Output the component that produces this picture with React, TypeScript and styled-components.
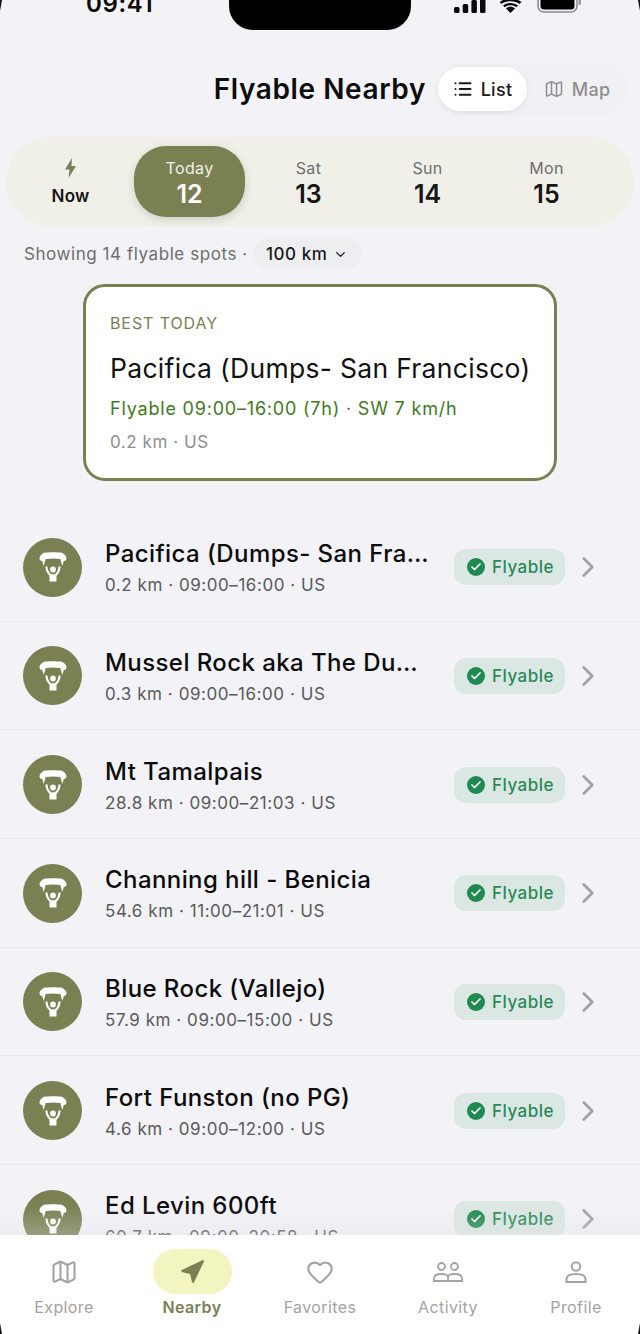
import React from 'react';
import styled, { createGlobalStyle } from 'styled-components';
import { Check, ChevronDown, ChevronRight, Heart, List as ListIcon, Map as MapIcon, Navigation } from 'lucide-react';

const olive = '#7a8052';

const GlobalStyle = createGlobalStyle`
  html, body { margin: 0; padding: 0; background: #f2f2f7; }
  body { font-family: Inter, "Liberation Sans", sans-serif; }
  * { box-sizing: border-box; }
`;

const Screen = styled.div`
  position: relative;
  width: 640px;
  height: 1334px;
  overflow: hidden;
  display: flex;
  flex-direction: column;
  background: #f2f2f7;
`;

// the device's rounded corners just show at the very edges of the capture
const Corner = styled.div<{ $right?: boolean; $bottom?: boolean }>`
  position: absolute;
  ${(p) => (p.$right ? 'right: 0;' : 'left: 0;')}
  ${(p) => (p.$bottom ? 'bottom: 0;' : 'top: 0;')}
  width: 2px;
  height: 11px;
  z-index: 2;
  background: #111;
  clip-path: ${(p) =>
    p.$bottom
      ? `polygon(${p.$right ? '100% 0, 100% 100%, 0 100%' : '0 0, 100% 100%, 0 100%'})`
      : `polygon(${p.$right ? '0 0, 100% 0, 100% 100%' : '0 0, 100% 0, 0 100%'})`};
`;

const StatusBar = styled.div`
  height: 30px;
  flex: none;
  display: flex;
  justify-content: space-between;
  overflow: hidden;
`;

const Time = styled.div`
  width: 229px;
  padding-left: 86px;
  margin-top: -11px;
  font-size: 24px;
  line-height: 29px;
  font-weight: 600;
  letter-spacing: 0.6px;
  color: #0a0a0a;
`;

const Notch = styled.div`
  width: 182px;
  height: 30px;
  flex: none;
  background: #000;
  border-radius: 0 0 24px 24px;
`;

const StatusIcons = styled.div`
  width: 229px;
  height: 30px;
  padding: 0 0 17px 43px;
  display: flex;
  align-items: flex-end;
`;

const Header = styled.header`
  margin-top: 33px;
  height: 52px;
  flex: none;
  padding-right: 12px;
  display: flex;
  justify-content: flex-end;
  align-items: center;
  gap: 12px;
`;

const Title = styled.h1`
  margin: 0;
  font-size: 28px;
  font-weight: 600;
  letter-spacing: 0.6px;
  color: #0d0d0d;
`;

const Toggle = styled.div`
  width: 190px;
  height: 52px;
  padding: 4px 0;
  border-radius: 26px;
  background: #f1f1f5;
  display: flex;
  align-items: stretch;
`;

const ToggleOption = styled.div<{ $active?: boolean }>`
  width: ${(p) => (p.$active ? '89px' : '100px')};
  border-radius: 22px;
  display: flex;
  align-items: center;
  justify-content: center;
  gap: 8px;
  font-size: 18px;
  font-weight: 500;
  letter-spacing: 0.3px;
  color: ${(p) => (p.$active ? '#1a1a1a' : '#8e8e8e')};
  background: ${(p) => (p.$active ? '#fff' : 'transparent')};
  box-shadow: ${(p) => (p.$active ? '0 2px 6px rgba(0,0,0,0.08)' : 'none')};
`;

const DateStrip = styled.div`
  margin: 22px 6px 0;
  height: 89px;
  flex: none;
  padding: 9px 9px;
  border-radius: 44px;
  background: #f0f0e8;
  display: flex;
  gap: 8px;
`;

const DateItem = styled.div<{ $active?: boolean }>`
  width: 111px;
  flex: none;
  padding-top: 2px;
  border-radius: 32px;
  display: flex;
  flex-direction: column;
  align-items: center;
  justify-content: center;
  background: ${(p) => (p.$active ? olive : 'transparent')};
  box-shadow: ${(p) => (p.$active ? '0 3px 10px rgba(0,0,0,0.14)' : 'none')};
`;

const DayName = styled.div<{ $active?: boolean }>`
  font-size: 16px;
  line-height: 22px;
  letter-spacing: 0.35px;
  color: ${(p) => (p.$active ? '#f1f1e6' : '#6e6e6e')};
`;

const DayNumber = styled.div<{ $active?: boolean }>`
  font-size: 25px;
  line-height: 30px;
  font-weight: 600;
  color: ${(p) => (p.$active ? '#fff' : '#161616')};
`;

const NowLabel = styled.div`
  font-size: 17px;
  line-height: 24px;
  font-weight: 600;
  letter-spacing: 0.2px;
  color: #161616;
  margin-top: 6px;
`;

const FilterRow = styled.div`
  margin-top: 13px;
  height: 30px;
  flex: none;
  padding-left: 24px;
  display: flex;
  align-items: center;
  gap: 5px;
  font-size: 17px;
  letter-spacing: 0.56px;
  color: #6d6d6d;
`;

const DistanceChip = styled.div`
  width: 109px;
  height: 30px;
  border-radius: 15px;
  background: #eeeef0;
  display: flex;
  align-items: center;
  justify-content: center;
  gap: 6px;
  font-size: 17px;
  font-weight: 500;
  color: #1a1a1a;
`;

const BestCard = styled.section`
  width: 474px;
  height: 197px;
  flex: none;
  margin: 15px 0 32px 83px;
  padding: 26px 24px 0;
  border: 3px solid ${olive};
  border-radius: 22px;
  background: #fff;
`;

const BestLabel = styled.div`
  font-size: 16px;
  line-height: 20px;
  letter-spacing: 0.9px;
  color: ${olive};
`;

const BestName = styled.div`
  margin-top: 18px;
  font-size: 26.5px;
  line-height: 34px;
  letter-spacing: 0.3px;
  white-space: nowrap;
  color: #121212;
`;

const BestWindow = styled.div`
  margin-top: 12px;
  font-size: 18px;
  line-height: 24px;
  letter-spacing: 0.8px;
  color: #3f7a1e;
`;

const BestMeta = styled.div`
  margin-top: 9px;
  font-size: 17px;
  line-height: 24px;
  letter-spacing: 0.55px;
  color: #8e8e8e;
`;

const SpotList = styled.div`
  flex: 1;
  min-height: 0;
  overflow: hidden;
`;

const SpotRow = styled.div`
  height: 108.67px;
  padding: 1px 35px 0 23px;
  display: flex;
  align-items: center;
  border-bottom: 1px solid #e9e9ed;
`;

const Avatar = styled.div`
  width: 59px;
  height: 59px;
  flex: none;
  border-radius: 50%;
  background: ${olive};
  display: flex;
  align-items: center;
  justify-content: center;
`;

const SpotText = styled.div`
  flex: 1;
  min-width: 0;
  margin-left: 23px;
`;

const SpotName = styled.div`
  width: 326px;
  margin-top: 1px;
  font-size: 24px;
  line-height: 30px;
  font-weight: 500;
  letter-spacing: 0.42px;
  color: #0c0c0c;
  white-space: nowrap;
  overflow: hidden;
  text-overflow: ellipsis;
`;

const SpotMeta = styled.div`
  margin-top: 5px;
  font-size: 17px;
  line-height: 22px;
  letter-spacing: 0.55px;
  color: #5a5a5a;
  white-space: nowrap;
`;

const FlyablePill = styled.div`
  width: 111px;
  height: 36px;
  flex: none;
  padding-left: 13px;
  border-radius: 12px;
  background: #dbe7e3;
  display: flex;
  align-items: center;
  gap: 7px;
  font-size: 17px;
  font-weight: 500;
  letter-spacing: 0.5px;
  color: #2a8a57;
`;

const CheckDot = styled.span`
  width: 18px;
  height: 18px;
  border-radius: 50%;
  background: #1f8a50;
  display: flex;
  align-items: center;
  justify-content: center;
  color: #fff;
`;

const Chevron = styled.span`
  margin-left: 6px;
  color: #a2a2a2;
  display: flex;
`;

const Fade = styled.div`
  position: absolute;
  left: 0;
  right: 0;
  bottom: 99px;
  height: 30px;
  pointer-events: none;
  background: linear-gradient(to bottom, rgba(225, 225, 228, 0), rgba(225, 225, 228, 0.3));
`;

const TabBar = styled.nav`
  height: 99px;
  flex: none;
  position: relative;
  background: #fff;
  display: grid;
  grid-template-columns: repeat(5, 128px);
`;

const Tab = styled.div<{ $active?: boolean }>`
  padding-top: 14px;
  display: flex;
  flex-direction: column;
  align-items: center;
  font-size: 16px;
  line-height: 24px;
  letter-spacing: 0.4px;
  font-weight: ${(p) => (p.$active ? 600 : 400)};
  color: ${(p) => (p.$active ? olive : '#a3a3a3')};
`;

const TabIcon = styled.div<{ $active?: boolean }>`
  width: 79px;
  height: 45px;
  margin-bottom: 1px;
  border-radius: 22px;
  background: ${(p) => (p.$active ? '#f3f5c1' : 'transparent')};
  display: flex;
  align-items: center;
  justify-content: center;
`;

const Glider = () => (
  <svg width="28" height="30" viewBox="0 0 28 30" fill="#fff">
    <path d="M5 .8C9 0 19 0 23 .8C25 1.800 27.500 4 27.500 6.200C27.500 8 26.500 9 24.800 9L23.300 14L21.300 7C17 6.300 11 6.300 6.700 7L4.700 14L3.200 9C1.500 9 .5 8 .5 6.200C.5 4 3 1.800 5 .8Z" />
    <circle cx="14" cy="17.500" r="2.900" />
    <path d="M7.400 14.500C7.800 18.500 9 21.500 11.500 23" fill="none" stroke="#fff" strokeWidth="2.200" />
    <path d="M20.600 14.500C20.200 18.500 19 21.500 16.500 23" fill="none" stroke="#fff" strokeWidth="2.200" />
    <rect x="10.500" y="22.300" width="7" height="7.200" />
  </svg>
);

const Bolt = () => (
  <svg width="11" height="20" viewBox="0 0 11 20" fill={olive}>
    <path d="M7 0L0 11.500H4.500L3.500 20L11 8H6.500Z" />
  </svg>
);

const CommunityIcon = () => (
  <svg width="30" height="20" viewBox="0 0 30 20" fill="none" stroke="currentColor" strokeWidth="1.800">
    <circle cx="8.500" cy="4.500" r="3.500" />
    <circle cx="21.500" cy="4.500" r="3.500" />
    <path d="M1 19v-2.500C1 13.500 4 12 8.500 12c3 0 5.500.7 6.500 2.300 1-1.600 3.500-2.300 6.500-2.300 4.500 0 7.500 1.500 7.500 4.500V19Z" />
    <path d="M15 14.300V19" />
  </svg>
);

const ProfileIcon = () => (
  <svg width="22" height="22" viewBox="0 0 22 22" fill="none" stroke="currentColor" strokeWidth="2">
    <circle cx="11" cy="5.500" r="4.200" />
    <path d="M1.500 21v-3C1.500 14.500 5.500 13 11 13s9.500 1.500 9.500 5v3Z" />
  </svg>
);

const spots = [
  ['Pacifica (Dumps- San Francisco)', '0.2 km · 09:00–16:00 · US'],
  ['Mussel Rock aka The Dumps', '0.3 km · 09:00–16:00 · US'],
  ['Mt Tamalpais', '28.8 km · 09:00–21:03 · US'],
  ['Channing hill - Benicia', '54.6 km · 11:00–21:01 · US'],
  ['Blue Rock (Vallejo)', '57.9 km · 09:00–15:00 · US'],
  ['Fort Funston (no PG)', '4.6 km · 09:00–12:00 · US'],
  ['Ed Levin 600ft', '60.7 km · 09:00–20:58 · US'],
];

const days = [
  ['Today', '12'],
  ['Sat', '13'],
  ['Sun', '14'],
  ['Mon', '15'],
];

export default function App() {
  return (
    <Screen>
      <GlobalStyle />
      <Corner />
      <Corner $right />
      <Corner $bottom />
      <Corner $bottom $right />
      <StatusBar>
        <Time>09:41</Time>
        <Notch />
        <StatusIcons>
          <svg width="32" height="14" viewBox="0 0 32 14" fill="#0a0a0a" style={{ marginRight: 12 }}>
            <rect x="0" y="8" width="5.500" height="6" rx="1.500" />
            <rect x="8.700" y="5" width="5.500" height="9" rx="1.500" />
            <rect x="17.400" y="1" width="5.500" height="13" rx="1.500" />
            <rect x="26" y="-2" width="5.500" height="16" rx="1.500" />
          </svg>
          <svg width="25" height="14" viewBox="0 0 24 14" fill="#0a0a0a" style={{ marginRight: 14 }}>
            <path d="M12 14L7.500 9.500C10 7.300 14 7.300 16.500 9.500Z" />
            <path d="M4.500 6.500C8.500 3 15.500 3 19.500 6.500L17.700 8.300C14.500 5.700 9.500 5.700 6.300 8.300Z" />
            <path d="M1 3C6.500 -1.500 17.500 -1.500 23 3L21 5C16.500 1.300 7.500 1.300 3 5Z" />
          </svg>
          <svg width="44" height="14" viewBox="0 0 44 14">
            <rect x="1" y="-8" width="39" height="21" rx="6" fill="none" stroke="#8a8a8a" strokeWidth="1.500" />
            <rect x="3.500" y="-6" width="34" height="16.500" rx="3.500" fill="#000" />
            <rect x="41.500" y="-2" width="2.500" height="8" rx="1" fill="#9a9a9a" />
          </svg>
        </StatusIcons>
      </StatusBar>

      <Header>
        <Title>Flyable Nearby</Title>
        <Toggle>
          <ToggleOption $active>
            <ListIcon size={20} strokeWidth={2.4} />
            List
          </ToggleOption>
          <ToggleOption>
            <MapIcon size={20} strokeWidth={1.8} />
            Map
          </ToggleOption>
        </Toggle>
      </Header>

      <DateStrip>
        <DateItem>
          <Bolt />
          <NowLabel>Now</NowLabel>
        </DateItem>
        {days.map(([name, num], i) => (
          <DateItem key={num} $active={i === 0}>
            <DayName $active={i === 0}>{name}</DayName>
            <DayNumber $active={i === 0}>{num}</DayNumber>
          </DateItem>
        ))}
      </DateStrip>

      <FilterRow>
        Showing 14 flyable spots ·
        <DistanceChip>
          100 km
          <ChevronDown size={15} strokeWidth={2.2} />
        </DistanceChip>
      </FilterRow>

      <BestCard>
        <BestLabel>BEST TODAY</BestLabel>
        <BestName>Pacifica (Dumps- San Francisco)</BestName>
        <BestWindow>Flyable 09:00–16:00 (7h) · SW 7 km/h</BestWindow>
        <BestMeta>0.2 km · US</BestMeta>
      </BestCard>

      <SpotList>
        {spots.map(([name, meta]) => (
          <SpotRow key={name}>
            <Avatar>
              <Glider />
            </Avatar>
            <SpotText>
              <SpotName>{name}</SpotName>
              <SpotMeta>{meta}</SpotMeta>
            </SpotText>
            <FlyablePill>
              <CheckDot>
                <Check size={12} strokeWidth={3.5} />
              </CheckDot>
              Flyable
            </FlyablePill>
            <Chevron>
              <ChevronRight size={34} strokeWidth={1.9} />
            </Chevron>
          </SpotRow>
        ))}
      </SpotList>

      <Fade />

      <TabBar>
        <Tab>
          <TabIcon>
            <MapIcon size={28} strokeWidth={1.8} />
          </TabIcon>
          Explore
        </Tab>
        <Tab $active>
          <TabIcon $active>
            <Navigation size={26} fill={olive} stroke={olive} />
          </TabIcon>
          Nearby
        </Tab>
        <Tab>
          <TabIcon>
            <Heart size={28} strokeWidth={1.8} />
          </TabIcon>
          Favorites
        </Tab>
        <Tab>
          <TabIcon>
            <CommunityIcon />
          </TabIcon>
          Activity
        </Tab>
        <Tab>
          <TabIcon>
            <ProfileIcon />
          </TabIcon>
          Profile
        </Tab>
      </TabBar>
    </Screen>
  );
}
